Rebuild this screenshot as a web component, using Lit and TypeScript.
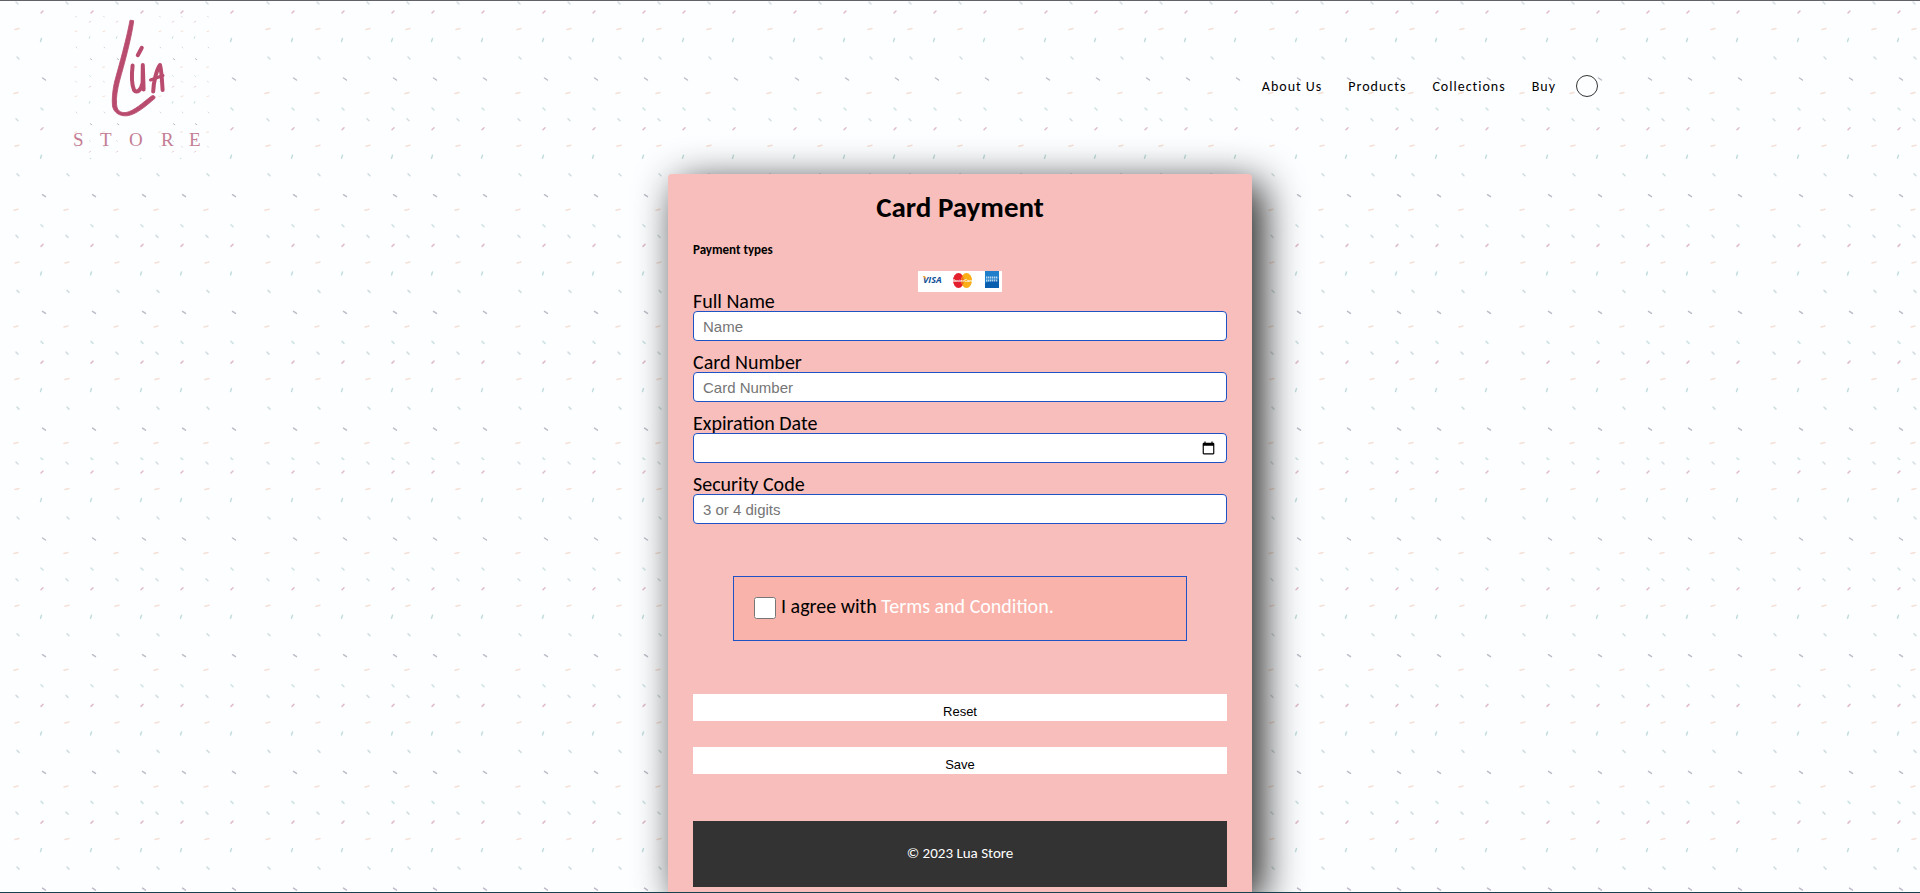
import { LitElement, html, svg, css, unsafeCSS } from "lit";
import { customElement } from "lit/decorators.js";

interface Dash {
  col: "a" | "b";
  dx: number;
  dy: number;
  w: number;
  h: number;
  color: string;
}

// One vertical run of confetti; it repeats down the tile.
const DASHES: Dash[] = [
  { col: "a", dx: 0, dy: 3, w: 2, h: 2, color: "#d3dde1" },
  { col: "b", dx: 0, dy: 12, w: 2, h: -2, color: "#e0bcc9" },
  { col: "a", dx: 0, dy: 29, w: 4, h: -1, color: "#f5e0d5" },
  { col: "b", dx: -1, dy: 40, w: 1, h: -3, color: "#c2dddd" },
  { col: "a", dx: 1, dy: 58, w: 2, h: 2, color: "#d0dde0" },
  { col: "b", dx: 2, dy: 79, w: 3, h: 2, color: "#bebcc8" },
  { col: "a", dx: -1, dy: 93, w: 4, h: -1, color: "#f5e0d5" },
  { col: "b", dx: 0, dy: 109, w: 2, h: 2, color: "#cde2e3" },
];

const dashPath = (d: Dash, x: number, y: number, s: number) => {
  const w = d.w * s;
  const h = d.h * s;
  return `M${(x - w / 2).toFixed(1)} ${(y - h / 2).toFixed(1)}l${w.toFixed(1)} ${h.toFixed(1)}`;
};

const confettiTile = () => {
  let out = "";
  for (let group = 0; group < 4; group++) {
    for (const d of DASHES) {
      const start = d.col === "a" ? 17 : 42;
      const path = [0, 50, 100, 140, 190]
        .map((o) => dashPath(d, start + o + d.dx, d.dy + group * 116.7, 1))
        .join("");
      out += `<path d="${path}" stroke="${d.color}" stroke-width="1.5" stroke-linecap="round"/>`;
    }
  }
  return `url("data:image/svg+xml,${encodeURIComponent(
    `<svg xmlns="http://www.w3.org/2000/svg" width="251" height="460">${out}</svg>`
  )}")`;
};

@customElement("store-logo")
class StoreLogo extends LitElement {
  static styles = css`
    :host {
      display: block;
    }
    .mark {
      display: block;
      width: 148px;
      height: 144px;
    }
    .word {
      font-family: "Liberation Serif", serif;
      font-size: 19px;
      fill: #c47d94;
    }
  `;

  render() {
    const specks = [0, 1, 2].flatMap((group) =>
      DASHES.flatMap((d) =>
        (d.col === "a" ? [76, 104, 160, 182, 208] : [90, 117, 173, 195]).map((x) => ({
          color: d.color,
          path: dashPath(d, x + d.dx / 2, 15 + d.dy * 0.56 + group * 65, 0.5),
        }))
      )
    );
    return html`
      <svg class="mark" viewBox="62 14 148 144" role="img" aria-label="Lúa Store">
        <rect x="62" y="14" width="148" height="144" fill="#fdfeff" />
        ${specks.map(
          (s) => svg`<path d=${s.path} stroke=${s.color} stroke-width="1" stroke-linecap="round" />`
        )}
        <path d="M133.6 20.6 L130 20.2 C127 37 119 66 114.500 82 C112.500 91 111.800 100 112.500 106 C113.500 112 119 116.500 127 115.800 C136 114.800 146 106 154.800 98.500 C156 96.500 153.500 94.500 151.500 96 C143 102.500 134 111 126 112.500 C120 113 117 110.500 116.500 104 C116 97 117.500 89 119.500 81 C124 65 131 40 133.600 22 Z" fill="#b94c6e" stroke="#b94c6e" stroke-width=".8" stroke-linejoin="round" />
        <g fill="none" stroke="#b94c6e" stroke-width="4" stroke-linecap="round" stroke-linejoin="round">
          <path d="M141.800 47.800 L137.800 55.200" />
          <path d="M132.600 65.500 C131.500 75 131.500 84 134 90 C137 94 141 90 142.600 83 L142.800 65 L143.600 89.500" />
          <path d="M153.200 91.500 C153.500 82 156.500 70 160 65 C161.500 70 162 80 162.600 90" />
          <path d="M150.500 80 L163 75.500" stroke-width="3" />
        </g>
        <text class="word" y="146" x="73 100 129 161 189">STORE</text>
      </svg>
    `;
  }
}

@customElement("card-brands")
class CardBrands extends LitElement {
  static styles = css`
    :host {
      display: block;
    }
    .strip {
      display: block;
      width: 84px;
      height: 21px;
    }
    .visa {
      font: italic bold 9px "Open Sans", sans-serif;
      fill: #14529b;
    }
    .tiny {
      font: bold 4px "Liberation Sans", sans-serif;
      fill: #fff;
      text-anchor: middle;
    }
  `;

  render() {
    return html`
      <svg class="strip" viewBox="0 0 84 21" role="img" aria-label="Visa, MasterCard, American Express">
        <rect width="84" height="21" fill="#fff" />
        <text class="visa" x="5" y="12">VISA</text>
        <path d="M4.500 5h2.500l1.500 4z" fill="#f0a52c" />
        <ellipse cx="40.500" cy="9.500" rx="5.500" ry="7.500" fill="#e5202e" />
        <ellipse cx="48.500" cy="9.500" rx="5.500" ry="7.500" fill="#fbae17" />
        <path d="M44.500 4.400a5.500 7.500 0 0 1 0 10.200a5.500 7.500 0 0 1 0-10.200z" fill="#f0701f" />
        <text class="tiny" x="44.500" y="11">MasterCard</text>
        <rect x="67" width="14" height="17" fill="#1f7fcb" />
        <path d="M67 17V12l14-4v9z" fill="#0a5fae" />
        <path d="M68 6.500h12M68 9.500h12" stroke="#fff" stroke-width="2" stroke-dasharray="1.400 .6" opacity=".7" />
      </svg>
    `;
  }
}

@customElement("app-root")
class AppRoot extends LitElement {
  static styles = css`
    :host {
      display: flex;
      flex-direction: column;
      box-sizing: border-box;
      min-height: 100vh;
      overflow: hidden;
      border-top: 1px solid #626167;
      border-bottom: 1px solid #17414d;
      background: #fdfeff ${unsafeCSS(confettiTile())} 0 0;
      background-origin: border-box;
      color: #000;
      font-family: Calibri, Carlito, Lato, sans-serif;
    }
    .header {
      display: flex;
      justify-content: space-between;
      align-items: flex-start;
      padding: 13px 322px 16px 62px;
    }
    .nav {
      display: flex;
      align-items: flex-start;
      gap: 26px;
      margin-top: 61px;
      font-size: 14px;
      line-height: 22px;
      letter-spacing: 1px;
    }
    .nav-link {
      padding-top: 1px;
      color: #000;
      text-decoration: none;
    }
    .ring {
      box-sizing: border-box;
      width: 22px;
      height: 22px;
      margin-left: -6px;
      padding: 0;
      border: 1px solid #333;
      border-radius: 50%;
      background: #fdfeff;
    }
    .card {
      flex: 1;
      display: flex;
      flex-direction: column;
      box-sizing: border-box;
      width: 584px;
      max-width: 100%;
      margin: 0 auto;
      padding: 15px 25px 5px;
      border-radius: 4px 4px 0 0;
      background: #f8bebb;
      box-shadow: 10px 10px 40px rgba(0, 0, 0, 0.9);
    }
    .title {
      margin: 0;
      font-size: 29px;
      line-height: 36px;
      text-align: center;
    }
    .subtitle {
      margin: 17px 0 13px;
      font-size: 13px;
      line-height: 16px;
    }
    .brands {
      align-self: center;
    }
    .fields {
      display: flex;
      flex-direction: column;
      gap: 12px;
    }
    .field {
      display: flex;
      flex-direction: column;
    }
    .label {
      font-size: 20px;
      line-height: 19px;
    }
    .input {
      box-sizing: border-box;
      width: 100%;
      height: 30px;
      padding: 0 8px 0 9px;
      border: 1px solid #1f53c5;
      border-radius: 4px;
      background: #fff;
      font-family: "Liberation Sans", Arial, sans-serif;
      font-size: 15px;
    }
    .input::placeholder {
      color: #757575;
    }
    .date::-webkit-datetime-edit {
      opacity: 0;
    }
    .terms {
      display: flex;
      align-items: flex-start;
      gap: 5px;
      margin: 52px 40px 53px;
      padding: 20px 20px 21px;
      border: 1px solid #1f53c5;
      background: #f9b3aa;
      font-size: 20px;
      line-height: 19px;
    }
    .check {
      width: 22px;
      height: 22px;
      margin: 0;
    }
    .terms-link {
      color: #fff;
      text-decoration: none;
    }
    .actions {
      display: flex;
      flex-direction: column;
      gap: 26px;
    }
    .button {
      height: 27px;
      padding: 7px 0 0;
      border: 0;
      background: #fff;
      color: #000;
      font-family: "Liberation Sans", Arial, sans-serif;
      font-size: 13px;
    }
    .footer {
      margin-top: 47px;
      padding: 21px 0 23px;
      background: #333;
      color: #fff;
      font-size: 15px;
      line-height: 22px;
      text-align: center;
    }
  `;

  render() {
    return html`
      <header class="header">
        <store-logo></store-logo>
        <nav class="nav">
          ${["About Us", "Products", "Collections", "Buy"].map(
            (name) => html`<a class="nav-link" href="#">${name}</a>`
          )}
          <button class="ring" type="button" aria-label="Account"></button>
        </nav>
      </header>
      <form class="card">
        <h1 class="title">Card Payment</h1>
        <h2 class="subtitle">Payment types</h2>
        <card-brands class="brands"></card-brands>
        <div class="fields">
          <div class="field">
            <label class="label" for="name">Full Name</label>
            <input class="input" id="name" type="text" placeholder="Name" />
          </div>
          <div class="field">
            <label class="label" for="number">Card Number</label>
            <input class="input" id="number" type="text" placeholder="Card Number" />
          </div>
          <div class="field">
            <label class="label" for="expiry">Expiration Date</label>
            <input class="input date" id="expiry" type="date" />
          </div>
          <div class="field">
            <label class="label" for="code">Security Code</label>
            <input class="input" id="code" type="text" placeholder="3 or 4 digits" />
          </div>
        </div>
        <div class="terms">
          <input class="check" id="agree" type="checkbox" />
          <label for="agree">I agree with <a class="terms-link" href="#">Terms and Condition.</a></label>
        </div>
        <div class="actions">
          <button class="button" type="reset">Reset</button>
          <button class="button" type="button">Save</button>
        </div>
        <footer class="footer">© 2023 Lua Store</footer>
      </form>
    `;
  }
}
